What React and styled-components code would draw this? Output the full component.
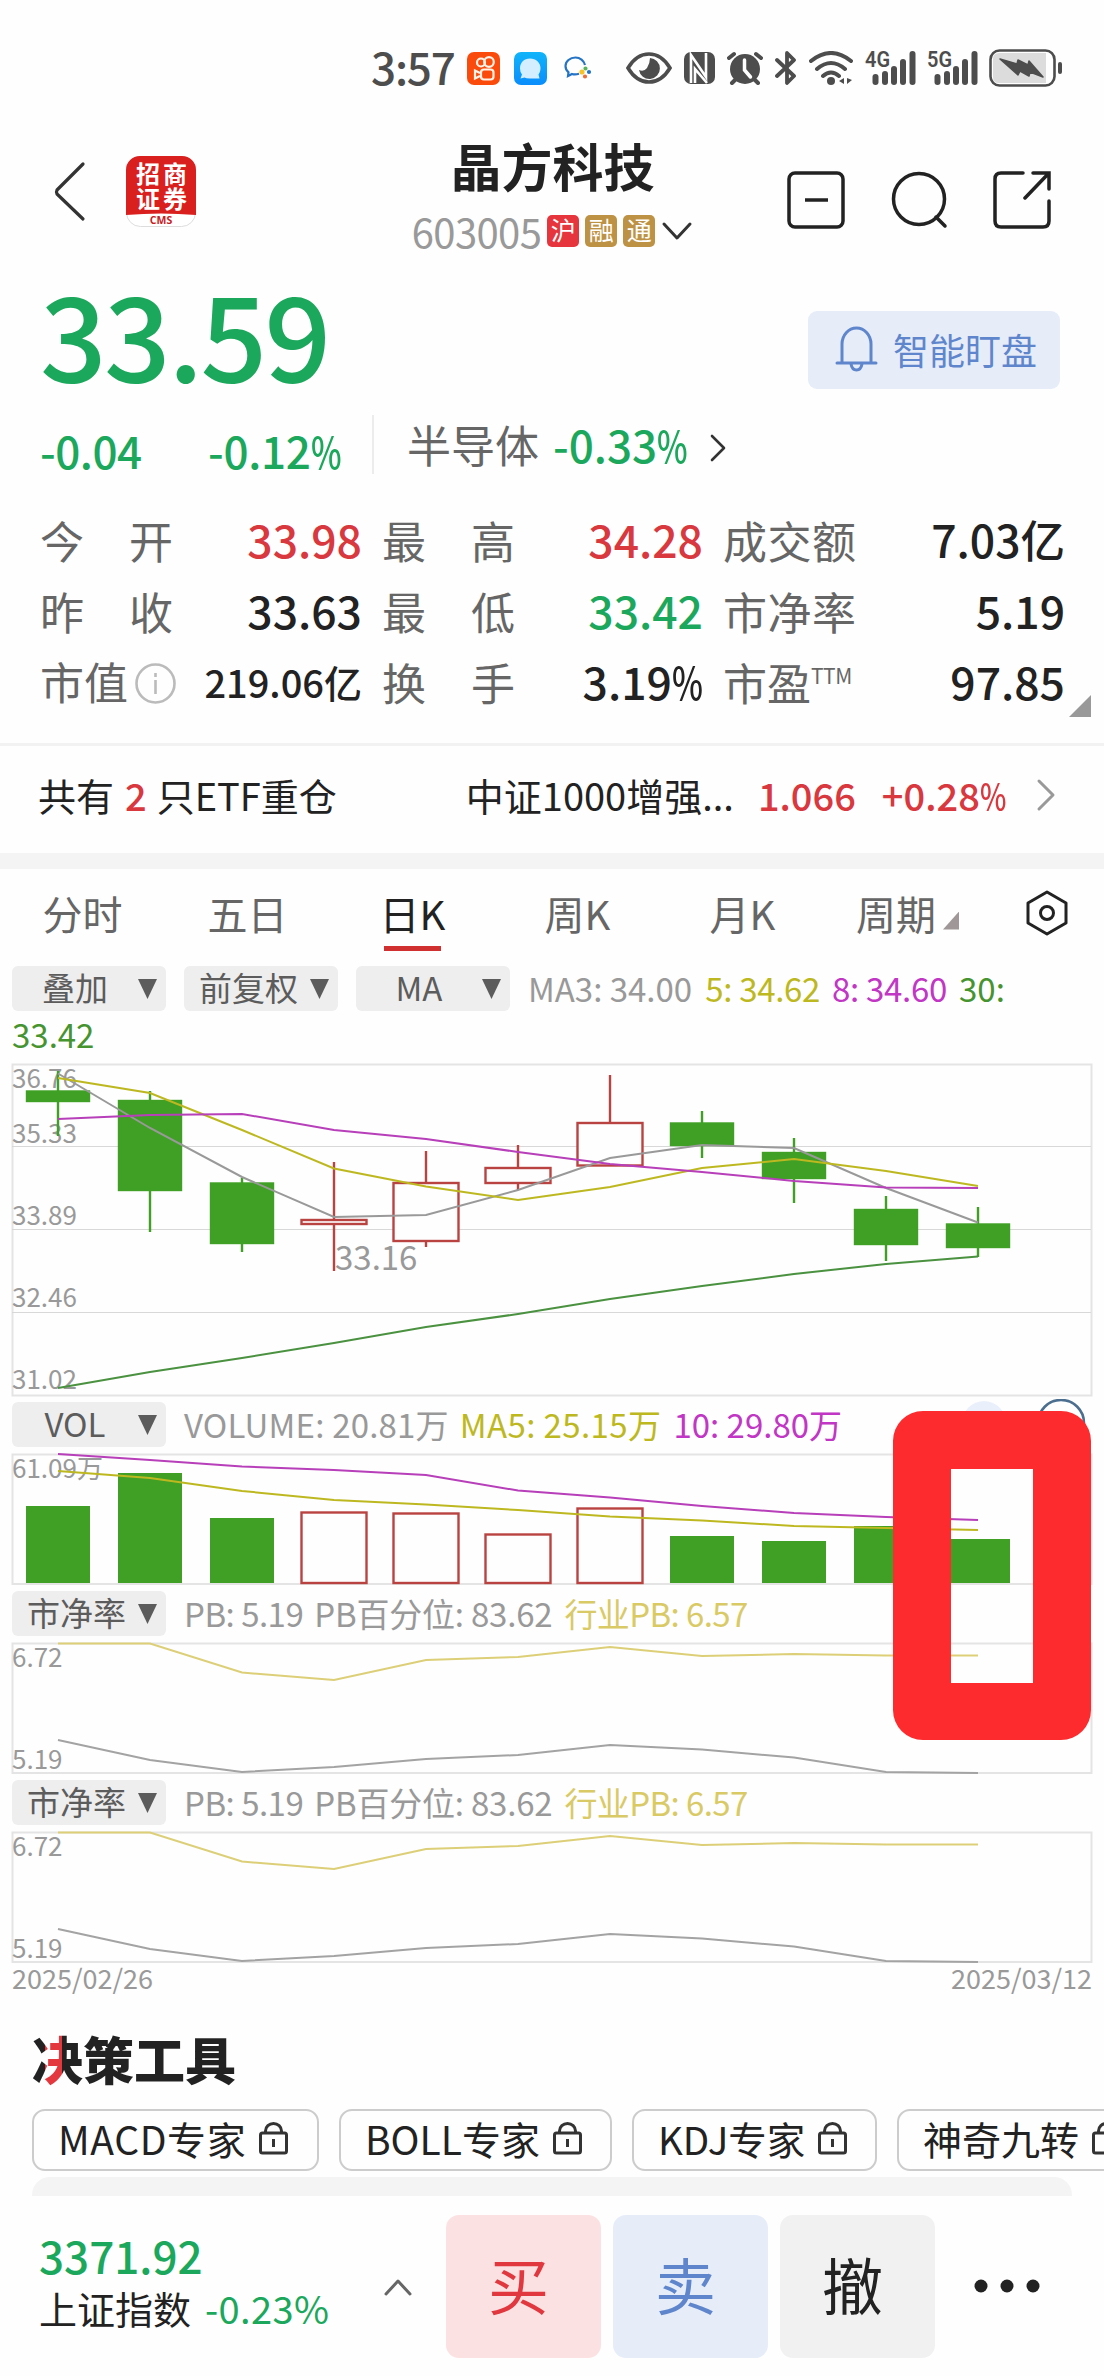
import React from 'react';
import styled, { createGlobalStyle } from 'styled-components';

const GREEN = '#1ba85c';
const RED = '#d8383e';
const INK = '#222222';
const GRAY = '#666666';
const BLUE = '#5f86cc';
const K_GREEN = '#3fa025';
const K_RED = '#b94340';

const GlobalStyle = createGlobalStyle`
    * { box-sizing: border-box; }
    body {
        margin: 0;
        background: #fefefe;
        font-family: "Noto Sans CJK SC", "Noto Sans", sans-serif;
        color: ${INK};
    }
    svg { display: block; flex: none; }
`;

const Page = styled.div`
    width: 1104px;
    height: 2376px;
    overflow: hidden;
    display: flex;
    flex-direction: column;
    background: #fefefe;
`;

/* every text run has a line box as high as its font, so rows stay compact */
const Text = styled.span`
    width: ${p => (p.$w ? `${p.$w}px` : 'auto')};
    font-size: ${p => p.$size || 44}px;
    line-height: 1;
    font-weight: ${p => p.$weight || 400};
    color: ${p => p.$color || INK};
    letter-spacing: ${p => p.$spacing || 0}px;
    margin-left: ${p => p.$ml || 0}px;
    margin-top: ${p => p.$mt || 0}px;
    white-space: pre;
    flex: none;
`;

/* narrow percent sign used next to the quote figures */
const Percent = styled.span`
    display: inline-block;
    transform: scaleX(0.74);
    transform-origin: 0 50%;
    margin-right: -0.24em;
`;

const StatusBar = styled.div`
    height: 118px;
    padding: 18px 44px 0 371px;
    display: flex;
    align-items: center;
    flex: none;
`;

const Clock = styled(Text)`
    padding-bottom: 5px;
`;

const Slot = styled.span`
    margin-left: ${p => p.$ml || 0}px;
    margin-top: ${p => p.$mt || 0}px;
    margin-right: ${p => p.$mr || 0}px;
    flex: none;
`;

const Header = styled.header`
    height: 152px;
    padding: 0 53px 0 54px;
    display: grid;
    grid-template-columns: 334px 1fr 334px;
    flex: none;
`;

const HeaderLeft = styled.div`
    display: flex;
    align-items: flex-start;
    gap: 40px;
    padding-top: 38px;
`;

const HeaderTitle = styled.div`
    display: flex;
    flex-direction: column;
    align-items: center;
    padding-top: 22px;
    gap: 20px;
`;

const HeaderActions = styled.div`
    display: flex;
    justify-content: flex-end;
    gap: 45px;
    padding-top: 53px;
`;

const CodeRow = styled.div`
    display: flex;
    align-items: center;
    gap: 6px;
    height: 40px;
`;

const Tag = styled.span`
    width: 32px;
    height: 32px;
    border-radius: 5px;
    background: ${p => p.$bg};
    color: #fff;
    font-size: 25px;
    line-height: 29px;
    text-align: center;
`;

const PriceRow = styled.div`
    height: 141px;
    padding: 0 44px 0 40px;
    display: flex;
    align-items: center;
    justify-content: space-between;
    flex: none;
`;

const Price = styled(Text)`
    padding-bottom: 18px;
`;

const WatchButton = styled.button`
    width: 252px;
    height: 78px;
    margin-top: 18px;
    padding: 0 0 2px 27px;
    border: 0;
    border-radius: 9px;
    background: #e6edf9;
    display: flex;
    align-items: center;
    gap: 15px;
    font-family: inherit;
`;

const ChangeRow = styled.div`
    height: 85px;
    padding-left: 40px;
    display: flex;
    align-items: flex-start;
    flex: none;
`;

const VRule = styled.i`
    width: 2px;
    height: 59px;
    margin: 4px 33px 0 32px;
    background: #ececec;
`;

const Quotes = styled.div`
    position: relative;
    height: 250px;
    padding: 8px 39px 0 40px;
    display: grid;
    grid-template-columns: 322px 321px 342px;
    grid-template-rows: repeat(3, 71px);
    column-gap: 20px;
    border-bottom: 3px solid #f2f2f2;
    flex: none;
`;

const Quote = styled.div`
    display: flex;
    align-items: center;
    justify-content: space-between;
`;

const QuoteLabel = styled.div`
    width: 133px;
    display: flex;
    justify-content: ${p => (p.$spread ? 'space-between' : 'flex-start')};
    font-size: 44px;
    line-height: 1;
    color: ${GRAY};
    white-space: nowrap;
    sup {
        font-size: 21px;
        line-height: 1;
        margin-top: 5px;
        letter-spacing: -0.5px;
    }
    svg { margin: 4px 0 0 7px; }
`;

const Corner = styled.i`
    position: absolute;
    right: 13px;
    bottom: 26px;
    width: 22px;
    height: 22px;
    background: #999;
    clip-path: polygon(100% 0, 100% 100%, 0 100%);
`;

const EtfRow = styled.div`
    height: 123px;
    padding: 0 49px 9px 38px;
    display: flex;
    align-items: center;
    border-bottom: 16px solid #f4f4f4;
    flex: none;
`;

const Tabs = styled.nav`
    height: 97px;
    display: grid;
    grid-template-columns: repeat(6, 165px) 1fr;
    align-items: start;
    padding-top: 20px;
    flex: none;
    > svg { margin: 1px 0 0 36px; }
`;

const Tab = styled.div`
    position: relative;
    height: 62px;
    display: flex;
    align-items: center;
    justify-content: center;
    gap: 7px;
    padding-bottom: 15px;
    font-size: 40px;
    line-height: 1;
    color: ${p => (p.$active ? INK : GRAY)};
    &::after {
        content: '';
        position: absolute;
        left: 54px;
        bottom: 0;
        width: 57px;
        height: 5px;
        background: ${p => (p.$active ? '#d0302f' : 'transparent')};
    }
`;

const MoreMark = styled.i`
    width: 16px;
    height: 18px;
    margin-top: 16px;
    background: #a09898;
    clip-path: polygon(100% 0, 100% 100%, 0 100%);
`;

const IndicatorRow = styled.div`
    height: 45px;
    margin: ${p => p.$mt || 0}px 0 ${p => p.$mb || 0}px 12px;
    display: flex;
    align-items: center;
    flex: none;
`;

const Picker = styled.div`
    width: 154px;
    height: 45px;
    margin-right: 18px;
    padding: 0 9px 3px 0;
    border-radius: 6px;
    background: #eeeeee;
    display: flex;
    align-items: center;
    font-size: 33px;
    line-height: 1;
    color: #5c5c5c;
    flex: none;
    span {
        flex: 1;
        text-align: center;
        padding-left: ${p => p.$pad}px;
        white-space: nowrap;
    }
`;

const PickArrow = styled.i`
    width: 19px;
    height: 20px;
    margin-top: 4px;
    background: #5c5c5c;
    clip-path: polygon(0 0, 100% 0, 50% 100%);
`;

const ChartText = styled.text`
    font-family: "Noto Sans CJK SC", sans-serif;
    font-size: ${p => p.$size || 26}px;
    fill: #999;
`;

const ChartStack = styled.section`
    position: relative;
    flex: none;
`;

const Wrapped = styled.div`
    height: 52px;
    padding: 7px 0 0 12px;
    flex: none;
`;

const FloatingButtons = styled.div`
    position: absolute;
    top: 433px;
    left: 960px;
`;

const Marker = styled.div`
    position: absolute;
    left: 893px;
    top: 445px;
    width: 198px;
    height: 329px;
    border: solid #fd2b2d;
    border-width: 58px 58px 57px;
    border-radius: 30px;
`;

const Dates = styled.div`
    height: 38px;
    padding: 0 12px 0 12px;
    display: flex;
    justify-content: space-between;
`;

const Tools = styled.section`
    padding-left: 32px;
    height: 194px;
    overflow: hidden;
    flex: none;
`;

const ToolsTitle = styled.h2`
    margin: 26px 0 0;
    width: 210px;
    font-size: 51px;
    line-height: 60px;
    font-weight: 900;
    color: transparent;
    background: linear-gradient(90deg, ${INK} 13px, #e2383e 13px, #e2383e 30px, ${INK} 30px);
    background-clip: text;
    -webkit-background-clip: text;
`;

const Chips = styled.div`
    display: flex;
    gap: 20px;
    margin-top: 21px;
`;

const Chip = styled.div`
    width: ${p => p.$w}px;
    height: 62px;
    border: 2px solid #cccccc;
    border-radius: 13px;
    padding: 0 0 3px 24px;
    display: flex;
    align-items: center;
    gap: 13px;
    flex: none;
`;

const Panel = styled.div`
    width: 1040px;
    height: 40px;
    margin-top: 6px;
    border-radius: 18px 18px 0 0;
    background: #f4f4f4;
`;

const BottomBar = styled.footer`
    flex: 1;
    background: #fefefe;
    padding: 19px 0 0 39px;
    display: flex;
`;

const IndexInfo = styled.div`
    width: 345px;
    padding-top: 18px;
    display: flex;
    flex-direction: column;
    gap: 12px;
`;

const IndexLine = styled.div`
    display: flex;
`;

const Trade = styled.button`
    width: 155px;
    height: 143px;
    margin-right: 12px;
    padding: 0 10px 7px 0;
    border: 0;
    border-radius: 13px;
    background: ${p => p.$bg};
    color: ${p => p.$color};
    font-family: inherit;
    font-size: 61px;
    line-height: 1;
`;

const Angle = ({ w, h, d, color = '#333', sw = 3 }) => (
    <svg width={w} height={h} fill="none" stroke={color} strokeWidth={sw} strokeLinecap="round" strokeLinejoin="round">
        <path d={d} />
    </svg>
);

const Lock = () => (
    <svg width="29" height="33" viewBox="0 0 29 33" fill="none" stroke="#333" strokeWidth="3">
        <rect x="1.5" y="11" width="26" height="20" rx="2" />
        <path d="M6.500 11V9a8 7.500 0 0 1 16 0v2M14.500 17v8" />
    </svg>
);

const BrokerLogo = () => (
    <svg width="70" height="71" viewBox="0 0 70 71">
        <rect x=".5" y=".5" width="69" height="70" rx="14" fill="#fff" stroke="#ddd" />
        <path d="M0 59V14A14 14 0 0 1 14 0h42a14 14 0 0 1 14 14v45q-35-3-70 0z" fill="#d9201f" />
        <g fill="#fff" fontFamily="Noto Sans CJK SC" fontSize="24" fontWeight="700">
            <text x="10" y="27">招</text>
            <text x="37" y="27">商</text>
            <text x="10" y="52">证</text>
            <text x="37" y="52">券</text>
        </g>
        <text x="35" y="68" textAnchor="middle" fill="#c8201f" fontFamily="Open Sans" fontSize="10.500" fontWeight="700">CMS</text>
    </svg>
);

const Signal = ({ label }) => (
    <svg width="51" height="36" viewBox="0 0 51 36" fill="#4d4d4d">
        <text x="0" y="17" fontFamily="Roboto" fontSize="22" fontWeight="600" textLength="25" lengthAdjust="spacingAndGlyphs">{label}</text>
        <rect x="7.500" y="24" width="6" height="11" rx="3" />
        <rect x="17" y="21" width="6" height="14" rx="3" />
        <rect x="26" y="16" width="6" height="19" rx="3" />
        <rect x="35" y="9" width="6" height="26" rx="3" />
        <rect x="44.500" y="1" width="6" height="34" rx="3" />
    </svg>
);

const StatusIcons = () => (
    <>
        <Slot $ml={12}>
            <svg width="33" height="33" viewBox="0 0 33 33">
                <rect width="33" height="33" rx="7" fill="#fa4b0c" />
                <g fill="none" stroke="#fff3e8" strokeWidth="2.200">
                    <circle cx="14" cy="10.500" r="4" />
                    <circle cx="22" cy="10" r="4.800" />
                    <rect x="14" y="17.500" width="12.500" height="10" rx="3" />
                    <path d="M13 21l-5-2.500v8l5-2.500" />
                </g>
            </svg>
        </Slot>
        <Slot $ml={14}>
            <svg width="33" height="33" viewBox="0 0 33 33">
                <defs>
                    <linearGradient id="msg" x2="0" y2="1">
                        <stop stopColor="#10b4fa" />
                        <stop offset="1" stopColor="#0a8dfb" />
                    </linearGradient>
                </defs>
                <rect width="33" height="33" rx="7" fill="url(#msg)" />
                <path d="M16 6.500c6 0 10.500 4.200 10.500 9.500 0 3-1 5-2 6.500l1 4H16q-4 0-5.500-1l-4 1 1.500-4q-2-2.500-2-6C6 10.500 10 6.500 16 6.500z" fill="#d3efff" />
            </svg>
        </Slot>
        <Slot $ml={17}>
            <svg width="28" height="24" viewBox="0 0 28 24" fill="none" strokeWidth="2.200">
                <path d="M21 9C20 4.500 16 1.500 11.500 1.500 6 1.500 1.500 5.300 1.500 10c0 3 1.500 5 3 6.300L4 20l4-2q3 1 7-.2" stroke="#2573c4" />
                <circle cx="18" cy="16" r="1.500" fill="#f6c228" stroke="#f6c228" />
                <circle cx="21" cy="20.500" r="1" fill="#ee6c35" stroke="#ee6c35" />
                <circle cx="25" cy="16" r="1" fill="#2573c4" stroke="#2573c4" />
                <circle cx="21.500" cy="12.500" r="1" fill="#57b65a" stroke="#57b65a" />
            </svg>
        </Slot>
        <Slot $ml={34}>
            <svg width="46" height="32" viewBox="0 0 46 32">
                <path d="M2 16C8 6 15 2 23 2s15 4 21 14c-6 10-13 14-21 14S8 26 2 16z" fill="none" stroke="#4d4d4d" strokeWidth="3.600" />
                <path d="M24 6a10.500 10.500 0 1 1-11 12q5 2 8-2 3-5 3-10z" fill="#4d4d4d" />
            </svg>
        </Slot>
        <Slot $ml={12}>
            <svg width="31" height="32" viewBox="0 0 31 32">
                <rect width="31" height="32" rx="7" fill="#4d4d4d" />
                <path d="M7 31V3l15 22V1M11 31V17l12 14" fill="none" stroke="#fefefe" strokeWidth="2.600" />
            </svg>
        </Slot>
        <Slot $ml={12}>
            <svg width="36" height="34" viewBox="0 0 36 34">
                <g stroke="#4d4d4d" strokeWidth="4" strokeLinecap="round">
                    <path d="M2 7l5-4M34 7l-5-4M8 29l-3 3M28 29l3 3" />
                </g>
                <circle cx="18" cy="18" r="15" fill="#4d4d4d" />
                <path d="M17.500 9v10l6 7" fill="none" stroke="#fefefe" strokeWidth="3.500" strokeLinecap="round" />
            </svg>
        </Slot>
        <Slot $ml={12}>
            <svg width="22" height="34" viewBox="0 0 22 34" fill="none" stroke="#4d4d4d" strokeWidth="3.800" strokeLinecap="round" strokeLinejoin="round">
                <path d="M2 9l17 16-7 7V2l7 7L2 25" />
            </svg>
        </Slot>
        <Slot $ml={12}>
            <svg width="44" height="34" viewBox="0 0 44 34" fill="none" stroke="#4d4d4d" strokeWidth="4" strokeLinecap="round">
                <path d="M2 10Q22-6 42 10M8 18q14-12 28 0M14 25q8-7 16 0" />
                <circle cx="22" cy="30" r="4" fill="#4d4d4d" stroke="none" />
                <path d="M35 27v6l-5-3zM38 27v6l5-4z" fill="#4d4d4d" stroke="none" />
            </svg>
        </Slot>
        <Slot $ml={12}><Signal label="4G" /></Slot>
        <Slot $ml={11}><Signal label="5G" /></Slot>
        <Slot $ml={11}>
            <svg width="74" height="38" viewBox="0 0 74 38">
                <rect x="1.500" y="1.500" width="64" height="35" rx="9" fill="#fefefe" stroke="#4d4d4d" strokeWidth="2.600" />
                <path d="M10 4h47v30H10q-6 0-6-6V10q0-6 6-6z" fill="#dcdcdc" />
                <path d="M11 10l17 5 1-4 10 5 1-4 14 16-13-5-1 4-9-5-2 4z" fill="#4d4d4d" stroke="#4d4d4d" strokeWidth="1.500" strokeLinejoin="round" />
                <rect x="69" y="13" width="4" height="12" rx="2" fill="#4d4d4d" />
            </svg>
        </Slot>
    </>
);

const Figure = ({ value, ...rest }) => {
    const pct = value.endsWith('%');
    return (
        <Text $weight={500} {...rest}>
            {pct ? value.slice(0, -1) : value}
            {pct && <Percent>%</Percent>}
        </Text>
    );
};

const quotes = [
    ['今开', '33.98', RED], ['最高', '34.28', RED], ['成交额', '7.03亿', INK],
    ['昨收', '33.63', INK], ['最低', '33.42', GREEN], ['市净率', '5.19', INK],
    ['市值', '219.06亿', INK, 38], ['换手', '3.19%', INK], ['市盈', '97.85', INK],
];

const InfoDot = () => (
    <svg width="41" height="41" viewBox="0 0 41 41" fill="none" stroke="#bbb" strokeWidth="2.600">
        <circle cx="20.500" cy="20.500" r="19" />
        <path d="M20.500 17v14M20.500 10v4" />
    </svg>
);

const QuoteName = ({ name }) => {
    if (name === '市值') return <QuoteLabel>市值<InfoDot /></QuoteLabel>;
    if (name === '市盈') return <QuoteLabel>市盈<sup>TTM</sup></QuoteLabel>;
    return (
        <QuoteLabel $spread>
            {name.split('').map(c => <span key={c}>{c}</span>)}
        </QuoteLabel>
    );
};

const xs = [58, 150, 242, 334, 426, 518, 610, 702, 794, 886, 978];
const line = ys => ys.map((y, i) => `${xs[i]},${y}`).join(' ');

/* [high, body top, body bottom, low, rising] measured from the top of the chart */
const candles = [
    [8, 28.5, 38, 73, 0],
    [28, 38, 127, 169, 0],
    [115, 120.5, 180, 189, 0],
    [99, 157, 161, 208, 1],
    [88, 120, 178, 184, 1],
    [82, 105, 120, 127, 1],
    [12, 60, 102.5, 102.5, 1],
    [48, 60.5, 82, 95, 0],
    [75, 90, 115, 140, 0],
    [133, 147, 181, 198, 0],
    [144, 161.5, 184, 194, 0],
];

const maLines = [
    ['#999999', [10.5, 65, 114, 154, 152, 127, 95, 82, 85, 125, 159.5]],
    ['#bdb820', [15, 30, 67, 105.5, 123.5, 137, 124, 105, 96, 108, 123]],
    ['#b73fb9', [56, 52, 51, 67, 76, 89, 101, 109, 118, 124.5, 125]],
    ['#4a9140', [325, 309, 295, 280, 264, 251, 236, 223, 211, 201, 193.5]],
];

const priceLabels = [['36.76', 25], ['35.33', 80], ['33.89', 162], ['32.46', 244], ['31.02', 326]];

const PriceChart = () => (
    <svg width="1104" height="336" viewBox="0 0 1104 336">
        <rect x="12.500" y="1.500" width="1079" height="331" fill="none" stroke="#e4e4e4" strokeWidth="2" />
        <path d="M12 83.500H1091M12 166.500H1091M12 249.500H1091" stroke="#d8d8d8" strokeWidth="1" />
        {priceLabels.map(([t, y]) => <ChartText key={t} x="12" y={y}>{t}</ChartText>)}
        <ChartText x="335" y="207" $size={33}>33.16</ChartText>
        {candles.map(([hi, top, bottom, lo, up], i) => (
            <g key={i} stroke={up ? K_RED : K_GREEN} strokeWidth="2.400">
                <path d={`M${xs[i]} ${hi}V${top}M${xs[i]} ${bottom}V${lo}`} />
                <rect
                    x={xs[i] - (up ? 32.5 : 31)}
                    y={top}
                    width={up ? 65 : 62}
                    height={bottom - top}
                    fill={up ? '#fefefe' : K_GREEN}
                />
            </g>
        ))}
        {maLines.map(([c, ys]) => <polyline key={c} points={line(ys)} fill="none" stroke={c} strokeWidth="2" />)}
    </svg>
);

const volumes = [
    [53, 0], [20, 0], [65, 0], [59.5, 1], [60.5, 1], [81.5, 1],
    [55.5, 1], [83, 0], [88, 0], [73, 0], [86, 0],
];

const VolumeChart = () => (
    <svg width="1104" height="133" viewBox="0 0 1104 133">
        <rect x="12.500" y="1.500" width="1079" height="129.500" fill="none" stroke="#e4e4e4" strokeWidth="2" />
        <ChartText x="12" y="25">61.09万</ChartText>
        {volumes.map(([top, up], i) => (
            <rect
                key={i}
                x={xs[i] - (up ? 32.5 : 32)}
                y={top}
                width={up ? 65 : 64}
                height={130 - top}
                fill={up ? '#fefefe' : K_GREEN}
                stroke={up ? K_RED : 'none'}
                strokeWidth="2.400"
            />
        ))}
        <polyline points={line([1, 7, 13.5, 17, 22, 37.5, 44.5, 53, 60, 64, 67])} fill="none" stroke="#b73fb9" strokeWidth="2" />
        <polyline points={line([18, 25, 38, 47, 51.5, 57, 63.5, 67.5, 73, 75, 77])} fill="none" stroke="#bdb820" strokeWidth="2" />
    </svg>
);

const PbChart = () => (
    <svg width="1104" height="133" viewBox="0 0 1104 133">
        <rect x="12.500" y="1.500" width="1079" height="129.500" fill="none" stroke="#e4e4e4" strokeWidth="2" />
        <ChartText x="12" y="25">6.72</ChartText>
        <ChartText x="12" y="127">5.19</ChartText>
        <polyline points={line([1.5, 1.5, 30.5, 38, 18, 15, 5, 14, 12, 13.5, 13.5])} fill="none" stroke="#dccf78" strokeWidth="2" />
        <polyline points={line([98, 118, 130, 125, 117, 113, 103, 107.5, 115.5, 130, 131])} fill="none" stroke="#a3a3a3" strokeWidth="2" />
    </svg>
);

const Pick = ({ label, pad = 0 }) => (
    <Picker $pad={pad}>
        <span>{label}</span>
        <PickArrow />
    </Picker>
);

const PbValues = () => (
    <>
        <Text $size={33} $color="#999" $spacing={-0.5}>PB: 5.19</Text>
        <Text $size={33} $color="#999" $ml={11} $spacing={-0.2}>PB百分位: 83.62</Text>
        <Text $size={33} $color="#d9ca66" $ml={12} $spacing={-0.6}>行业PB: 6.57</Text>
    </>
);

const tabs = ['分时', '五日', '日K', '周K', '月K', '周期'];

const App = () => (
    <>
        <GlobalStyle />
        <Page>
            <StatusBar>
                <Clock $size={44} $weight={500} $color="#4d4d4d" $spacing={-1.2}>3:57</Clock>
                <StatusIcons />
            </StatusBar>

            <Header>
                <HeaderLeft>
                    <Angle w={32} h={72} sw={3.2} d="M29 8L3 34q-1 2 0 4L29 63" />
                    <BrokerLogo />
                </HeaderLeft>
                <HeaderTitle>
                    <Text $size={51} $weight={700}>晶方科技</Text>
                    <CodeRow>
                        <Text $size={40} $color="#999" $spacing={-0.6}>603005</Text>
                        <Tag $bg="#e6353c">沪</Tag>
                        <Tag $bg="#be9245">融</Tag>
                        <Tag $bg="#be9245">通</Tag>
                        <Angle w={32} h={20} d="M3 3L16 17 29 3" />
                    </CodeRow>
                </HeaderTitle>
                <HeaderActions>
                    <svg width="58" height="58" viewBox="0 0 58 58" fill="none" stroke={INK} strokeWidth="3.500">
                        <rect x="2" y="2" width="54" height="54" rx="6" />
                        <path d="M18 29h23" />
                    </svg>
                    <svg width="58" height="58" viewBox="0 0 58 58" fill="none" stroke={INK} strokeWidth="3.500" strokeLinecap="round">
                        <circle cx="29" cy="28" r="25.500" />
                        <path d="M46 46l9 9" />
                    </svg>
                    <svg width="58" height="58" viewBox="0 0 58 58" fill="none" stroke={INK} strokeWidth="3.500" strokeLinecap="round">
                        <path d="M30 2H8q-6 0-6 6v42q0 6 6 6h42q6 0 6-6V30M40 2h16v16M55 3L32 27" />
                    </svg>
                </HeaderActions>
            </Header>

            <PriceRow>
                <Price $size={117} $weight={500} $color={GREEN} $spacing={-2.6}>33.59</Price>
                <WatchButton>
                    <svg width="43" height="46" viewBox="0 0 43 46" fill="none" stroke={BLUE} strokeWidth="3" strokeLinecap="round">
                        <path d="M2 37h39M7 37V18a14.500 16 0 0 1 29 0v19M16 38q1 6 5.500 6t5.500-6" />
                    </svg>
                    <Text $size={36} $color={BLUE}>智能盯盘</Text>
                </WatchButton>
            </PriceRow>

            <ChangeRow>
                <Figure value="-0.04" $color={GREEN} $w={168} $mt={17} $spacing={-0.5} />
                <Figure value="-0.12%" $color={GREEN} $w={132} $mt={17} $spacing={-0.3} />
                <VRule />
                <Text $color={GRAY} $mt={11}>半导体</Text>
                <Figure value="-0.33%" $color={GREEN} $w={136} $ml={14} $mt={11} $spacing={0} />
                <Slot $ml={20} $mt={22}>
                    <Angle w={18} h={30} sw={2.6} d="M3 3L15 15 3 27" />
                </Slot>
            </ChangeRow>

            <Quotes>
                {quotes.map(([name, value, color, size]) => (
                    <Quote key={name}>
                        <QuoteName name={name} />
                        <Figure value={value} $size={size || 44.5} $color={color} />
                    </Quote>
                ))}
                <Corner />
            </Quotes>

            <EtfRow>
                <Text $size={38}>共有</Text>
                <Text $size={38} $weight={500} $color={RED} $ml={11}>2</Text>
                <Text $size={38} $ml={10}>只ETF重仓</Text>
                <Text $size={38} $ml={129}>中证1000增强...</Text>
                <Figure value="1.066" $size={38} $color={RED} $ml={24} />
                <Figure value="+0.28%" $size={38} $color={RED} $w={122} $ml={26} />
                <Slot $ml={32}>
                    <Angle w={20} h={34} color="#999" d="M3 3L17 17 3 31" />
                </Slot>
            </EtfRow>

            <Tabs>
                {tabs.map(t => (
                    <Tab key={t} $active={t === '日K'}>
                        {t}
                        {t === '周期' && <MoreMark />}
                    </Tab>
                ))}
                <svg width="42" height="46" viewBox="0 0 42 46" fill="none" stroke={INK} strokeWidth="3">
                    <path d="M21 2l19 11v20L21 44 2 33V13z" strokeLinejoin="round" />
                    <circle cx="21" cy="23" r="6.500" />
                </svg>
            </Tabs>

            <ChartStack>
                <IndicatorRow>
                    <Pick label="叠加" />
                    <Pick label="前复权" pad={3} />
                    <Pick label="MA" />
                    <Text $size={33} $color="#999">MA3: 34.00</Text>
                    <Text $size={33} $color="#bdb820" $ml={13} $spacing={-0.3}>5: 34.62</Text>
                    <Text $size={33} $color="#c136c4" $ml={12} $spacing={-0.3}>8: 34.60</Text>
                    <Text $size={33} $color="#46942f" $ml={12}>30:</Text>
                </IndicatorRow>
                <Wrapped>
                    <Text $size={33} $color="#46942f">33.42</Text>
                </Wrapped>
                <PriceChart />
                <FloatingButtons>
                    <svg width="130" height="50" viewBox="0 0 130 50">
                        <circle cx="24" cy="24" r="22" fill="#eaf0fb" />
                        <circle cx="101" cy="24" r="23" fill="#fefefe" stroke="#4c6f8f" strokeWidth="2.600" />
                    </svg>
                </FloatingButtons>
                <IndicatorRow $mt={3} $mb={6}>
                    <Pick label="VOL" />
                    <Text $size={33} $color="#999" $spacing={0.2}>VOLUME: 20.81万</Text>
                    <Text $size={33} $color="#bdb820" $ml={11} $spacing={0.4}>MA5: 25.15万</Text>
                    <Text $size={33} $color="#c136c4" $ml={12}>10: 29.80万</Text>
                </IndicatorRow>
                <VolumeChart />
                <IndicatorRow $mt={5} $mb={6}>
                    <Pick label="市净率" pad={3} />
                    <PbValues />
                </IndicatorRow>
                <PbChart />
                <IndicatorRow $mt={5} $mb={6}>
                    <Pick label="市净率" pad={3} />
                    <PbValues />
                </IndicatorRow>
                <PbChart />
                <Dates>
                    <Text $size={27} $color="#999">2025/02/26</Text>
                    <Text $size={27} $color="#999">2025/03/12</Text>
                </Dates>
                <Marker />
            </ChartStack>

            <Tools>
                <ToolsTitle>决策工具</ToolsTitle>
                <Chips>
                    <Chip $w={287}><Text $size={39} $spacing={0.6}>MACD专家</Text><Lock /></Chip>
                    <Chip $w={273}><Text $size={39}>BOLL专家</Text><Lock /></Chip>
                    <Chip $w={245}><Text $size={38.5}>KDJ专家</Text><Lock /></Chip>
                    <Chip $w={247}><Text $size={39}>神奇九转</Text><Lock /></Chip>
                </Chips>
                <Panel />
            </Tools>

            <BottomBar>
                <IndexInfo>
                    <Text $size={44} $weight={500} $color={GREEN}>3371.92</Text>
                    <IndexLine>
                        <Text $size={38}>上证指数</Text>
                        <Text $size={38} $color={GREEN} $ml={14} $spacing={0.4}>-0.23%</Text>
                    </IndexLine>
                </IndexInfo>
                <Slot $mt={63} $mr={34}>
                    <Angle w={28} h={18} color="#666" d="M2 16L14 3 26 16" />
                </Slot>
                <Trade $bg="#fce1e2" $color="#e0383e">买</Trade>
                <Trade $bg="#e6edf9" $color={BLUE}>卖</Trade>
                <Trade $bg="#f1f1f1" $color={INK}>撤</Trade>
                <Slot $ml={26} $mt={64}>
                    <svg width="70" height="14" viewBox="0 0 70 14" fill={INK}>
                        <circle cx="8" cy="7" r="6.500" />
                        <circle cx="34" cy="7" r="6.500" />
                        <circle cx="60" cy="7" r="6.500" />
                    </svg>
                </Slot>
            </BottomBar>
        </Page>
    </>
);

export default App;
